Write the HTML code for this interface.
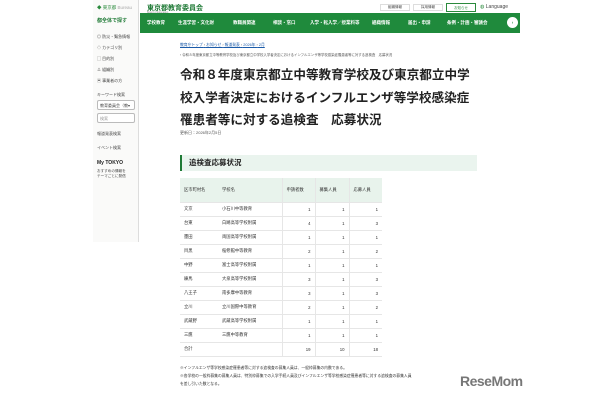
<!DOCTYPE html><html><head><meta charset="utf-8"><style>
*{margin:0;padding:0;box-sizing:border-box}
body{width:610px;height:400px;background:#fff;font-family:"Liberation Sans","Noto Sans CJK JP",sans-serif;color:#222;position:relative;overflow:hidden}
.a{position:absolute;white-space:nowrap}
.side{position:absolute;left:93px;top:0;width:46px;height:242px;background:#fafaf9;border-right:1px solid #ddd}
.side div{position:absolute;left:4px;font-size:4px;color:#444;white-space:nowrap}
.nav{position:absolute;left:140px;top:13px;width:380px;height:20px;background:#1f8a3c}
.nav span{position:absolute;top:7px;font-size:4.5px;color:#fff;white-space:nowrap;font-weight:bold}
.h1{font-size:12.6px;font-weight:bold;color:#222;line-height:22.5px;left:180px;top:64px;white-space:nowrap}
table{position:absolute;left:180px;top:178px;border-collapse:collapse;font-size:4.3px;color:#333}
td{height:14px;border-bottom:1px solid #e6e6e6;padding:0 4px}
tr.hd td{height:24px;background:#e8f3ec}
td.n{text-align:right;border-left:1px solid #e6e6e6}
</style></head><body>
<div class="side">
<div style="top:5px;color:#2a8a3c;font-size:4.5px">◆ 東京都 <span style="color:#aaa">Bureau</span></div>
<div style="top:17px;color:#1f7a36;font-weight:bold;font-size:5px">都全体で探す</div>
<div style="top:34px">◎ 防災・緊急情報</div>
<div style="top:45px">◇ カテゴリ別</div>
<div style="top:56px">▢ 目的別</div>
<div style="top:67px">⁂ 組織別</div>
<div style="top:78px">▣ 事業者の方</div>
<div style="top:92px">キーワード検索</div>
<div style="top:100px;width:38px;height:10px;border:1px solid #bbb;background:#fff;border-radius:2px;padding:2px">教育委員会（教▾</div>
<div style="top:113px;width:38px;height:10px;border:1px solid #bbb;background:#fff;border-radius:2px;padding:2px;color:#999">検索</div>
<div style="top:131px">報道発表検索</div>
<div style="top:145px">イベント検索</div>
<div style="top:160px;font-weight:bold;font-size:5px;color:#222">My TOKYO</div>
<div style="top:169px;font-size:3.6px">おすすめの情報を<br>テーマごとに発信</div>
</div>
<div class="a" style="left:147px;top:3px;font-size:7px;font-weight:bold;color:#1f7a36">東京都教育委員会</div>
<div class="a" style="left:147px;top:11px;font-size:2.5px;color:#888">Board of Education</div>
<div class="a" style="left:380px;top:4px;width:30px;height:7px;border:1px solid #ddd;font-size:3.5px;text-align:center;color:#444">組織情報</div>
<div class="a" style="left:413px;top:4px;width:30px;height:7px;border:1px solid #ddd;font-size:3.5px;text-align:center;color:#444">採用情報</div>
<div class="a" style="left:446px;top:3px;width:30px;height:9px;border:1px solid #2a8a3c;font-size:3.5px;text-align:center;color:#2a8a3c;padding-top:2px">お知らせ</div>
<div class="a" style="left:480px;top:4px;font-size:5px;color:#444"><span style="color:#2a8a3c">◍</span> Language</div>
<div class="nav">
<span style="left:7px">学校教育</span><span style="left:38px">生涯学習・文化財</span><span style="left:93px">教職員関連</span><span style="left:133px">相談・窓口</span><span style="left:170px">入学・転入学／授業料等</span><span style="left:232px">組織情報</span><span style="left:268px">届出・申請</span><span style="left:307px">条例・計画・審議会</span>
<span style="left:367px;top:4px;width:11px;height:11px;border-radius:50%;background:#fff;color:#1f8a3c;text-align:center;line-height:11px">›</span>
</div>
<div class="a" style="left:180px;top:43px;font-size:3.8px;color:#1a5aa8;text-decoration:underline">教育庁トップ <span style="color:#666">›</span> お知らせ <span style="color:#666">›</span> 報道発表 <span style="color:#666">›</span> 2026年 <span style="color:#666">›</span> 2月</div>
<div class="a" style="left:180px;top:52px;font-size:3.4px;color:#555">› 令和８年度東京都立中等教育学校及び東京都立中学校入学者決定におけるインフルエンザ等学校感染症罹患者等に対する追検査　応募状況</div>
<div class="a h1">令和８年度東京都立中等教育学校及び東京都立中学<br>校入学者決定におけるインフルエンザ等学校感染症<br>罹患者等に対する追検査　応募状況</div>
<div class="a" style="left:180px;top:130px;font-size:4px;color:#555">更新日：2026年2月5日</div>
<div class="a" style="left:180px;top:155px;width:297px;height:16px;background:#eaf4ee;border-left:2px solid #1f7a36;padding:2px 0 0 7px;font-size:7.5px;font-weight:bold">追検査応募状況</div>
<table>
<tr class="hd"><td style="width:38px">区市町村名</td><td style="width:64px">学校名</td><td style="width:33px;border-left:1px solid #e6e6e6">申請者数</td><td style="width:34px;border-left:1px solid #e6e6e6">募集人員</td><td style="width:33px;border-left:1px solid #e6e6e6">応募人員</td></tr>
<tr><td>文京</td><td>小石川中等教育</td><td class="n">1</td><td class="n">1</td><td class="n">1</td></tr>
<tr><td>台東</td><td>白鷗高等学校附属</td><td class="n">4</td><td class="n">1</td><td class="n">3</td></tr>
<tr><td>墨田</td><td>両国高等学校附属</td><td class="n">1</td><td class="n">1</td><td class="n">1</td></tr>
<tr><td>目黒</td><td>桜修館中等教育</td><td class="n">2</td><td class="n">1</td><td class="n">2</td></tr>
<tr><td>中野</td><td>富士高等学校附属</td><td class="n">1</td><td class="n">1</td><td class="n">1</td></tr>
<tr><td>練馬</td><td>大泉高等学校附属</td><td class="n">3</td><td class="n">1</td><td class="n">3</td></tr>
<tr><td>八王子</td><td>南多摩中等教育</td><td class="n">3</td><td class="n">1</td><td class="n">3</td></tr>
<tr><td>立川</td><td>立川国際中等教育</td><td class="n">2</td><td class="n">1</td><td class="n">2</td></tr>
<tr><td>武蔵野</td><td>武蔵高等学校附属</td><td class="n">1</td><td class="n">1</td><td class="n">1</td></tr>
<tr><td>三鷹</td><td>三鷹中等教育</td><td class="n">1</td><td class="n">1</td><td class="n">1</td></tr>
<tr><td>合計</td><td></td><td class="n">19</td><td class="n">10</td><td class="n">18</td></tr>
</table>
<div class="a" style="left:180px;top:364px;font-size:3.8px;color:#333;line-height:8px">※インフルエンザ等学校感染症罹患者等に対する追検査の募集人員は、一般枠募集の内数である。<br>※各学校の一般枠募集の募集人員は、特別枠募集での入学手続人員及びインフルエンザ等学校感染症罹患者等に対する追検査の募集人員<br>を差し引いた数となる。</div>
<div class="a" style="left:460px;top:373px;font-size:14px;font-weight:bold;color:#777;letter-spacing:-0.5px">ReseMom</div>
</body></html>
